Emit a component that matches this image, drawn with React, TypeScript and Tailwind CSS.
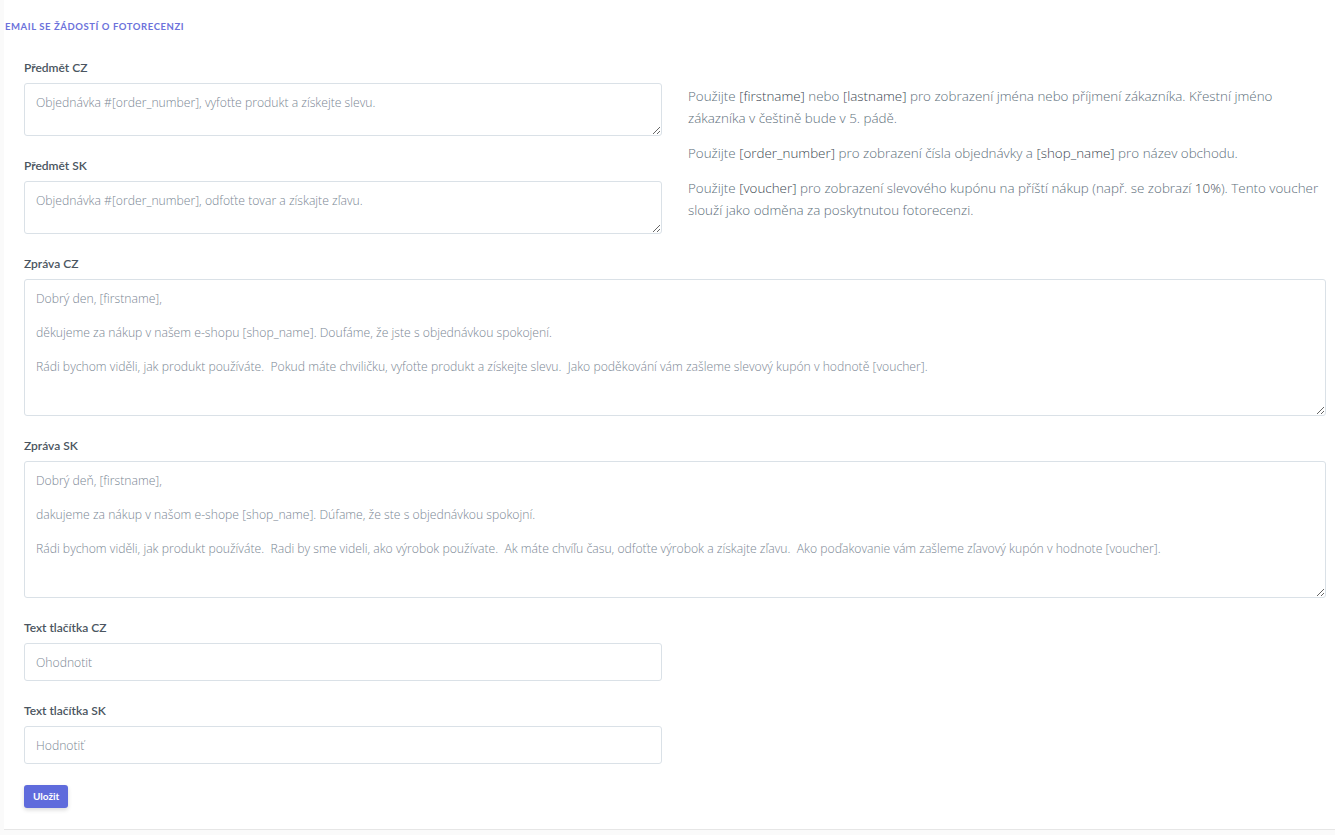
import React from "react";

const labelCls =
  "block text-[12px] leading-[16px] font-semibold text-[#4a5560] mb-[7px] [font-family:Lato,'Open_Sans',sans-serif]";
const fieldCls =
  "block w-full border border-[#dae1e7] rounded-[3px] bg-white px-[11px] text-[12.2px] leading-[17px] font-light text-[#3d4852] placeholder:text-[#7b8794] outline-none [font-family:'Open_Sans',sans-serif]";

function Tok({ children }: { children: React.ReactNode }) {
  return <span className="text-[#3d4852]">{children}</span>;
}

export default function App() {
  return (
    <div className="w-full min-h-[835px] bg-[#fafafa]">
      <div className="bg-white border-b border-[#e6e6e6] ml-[4px]">
        <div className="pl-[1px] pt-[22px] text-[9.5px] leading-[10px] font-bold uppercase tracking-[0.06em] text-[#6c72db] [font-family:Lato,sans-serif]">
          Email se žádostí o fotorecenzi
        </div>
        <div className="pl-[20px] pr-[9px] pt-[28px] pb-[21px]">
          <div className="grid grid-cols-2 gap-x-[26px]">
            <div>
              <div className="mb-[22px]">
                <label className={labelCls}>Předmět CZ</label>
                <textarea
                  className={fieldCls + " h-[53px] pt-[10px]"}
                  placeholder="Objednávka #[order_number], vyfoťte produkt a získejte slevu."
                />
              </div>
              <div className="mb-[22px]">
                <label className={labelCls}>Předmět SK</label>
                <textarea
                  className={fieldCls + " h-[53px] pt-[10px]"}
                  placeholder="Objednávka #[order_number], odfoťte tovar a získajte zľavu."
                />
              </div>
            </div>
            <div className="pt-[25px] text-[13.4px] leading-[22px] font-light text-[#606f7b] [font-family:'Open_Sans',sans-serif] flex flex-col gap-[13px]">
              <p>
                Použijte <Tok>[firstname]</Tok> nebo <Tok>[lastname]</Tok> pro zobrazení jména nebo příjmení zákazníka. Křestní jméno zákazníka v češtině bude v 5. pádě.
              </p>
              <p>
                Použijte <Tok>[order_number]</Tok> pro zobrazení čísla objednávky a <Tok>[shop_name]</Tok> pro název obchodu.
              </p>
              <p>
                Použijte <Tok>[voucher]</Tok> pro zobrazení slevového kupónu na příští nákup (např. se zobrazí <Tok>10%</Tok>). Tento voucher slouží jako odměna za poskytnutou fotorecenzi.
              </p>
            </div>
          </div>

          <div className="mb-[22px]">
            <label className={labelCls}>Zpráva CZ</label>
            <textarea
              className={fieldCls + " h-[137px] pt-[10px]"}
              placeholder={
                "Dobrý den, [firstname],\n\nděkujeme za nákup v našem e-shopu [shop_name]. Doufáme, že jste s objednávkou spokojení.\n\nRádi bychom viděli, jak produkt používáte.  Pokud máte chviličku, vyfoťte produkt a získejte slevu.  Jako poděkování vám zašleme slevový kupón v hodnotě [voucher]."
              }
            />
          </div>
          <div className="mb-[22px]">
            <label className={labelCls}>Zpráva SK</label>
            <textarea
              className={fieldCls + " h-[137px] pt-[10px]"}
              placeholder={
                "Dobrý deň, [firstname],\n\ndakujeme za nákup v našom e-shope [shop_name]. Dúfame, že ste s objednávkou spokojní.\n\nRádi bychom viděli, jak produkt používáte.  Radi by sme videli, ako výrobok používate.  Ak máte chvíľu času, odfoťte výrobok a získajte zľavu.  Ako poďakovanie vám zašleme zľavový kupón v hodnote [voucher]."
              }
            />
          </div>

          <div className="grid grid-cols-2 gap-x-[26px]">
            <div>
              <div className="mb-[22px]">
                <label className={labelCls}>Text tlačítka CZ</label>
                <input className={fieldCls + " h-[38px]"} placeholder="Ohodnotit" />
              </div>
              <div className="mb-[21px]">
                <label className={labelCls}>Text tlačítka SK</label>
                <input className={fieldCls + " h-[38px]"} placeholder="Hodnotiť" />
              </div>
            </div>
          </div>

          <button className="block h-[23px] px-[9px] rounded-[3px] bg-[#5f6bdc] text-white text-[10px] font-bold shadow-[0_2px_4px_rgba(0,0,0,0.15)] [font-family:Lato,sans-serif]">
            Uložit
          </button>
        </div>
      </div>
    </div>
  );
}
